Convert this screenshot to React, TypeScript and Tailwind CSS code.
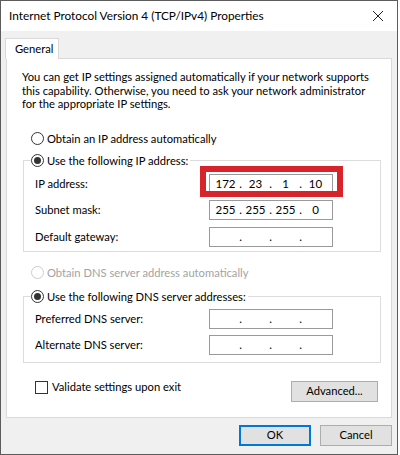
import React from "react";

const font = { fontFamily: 'Lato, "Noto Sans", sans-serif' };

function IpBox({ values }: { values?: string[] }) {
  const v = values ?? ["", "", "", ""];
  return (
    <div className="w-[124px] h-[20px] border border-[#9a9a9a] bg-white flex items-center pl-[3px] text-[11.5px] text-black leading-none">
      <span className="w-[25px] text-center">{v[0]}</span>
      <span className="w-[5px] text-center">.</span>
      <span className="w-[25px] text-center">{v[1]}</span>
      <span className="w-[5px] text-center">.</span>
      <span className="w-[25px] text-center">{v[2]}</span>
      <span className="w-[5px] text-center">.</span>
      <span className="w-[25px] text-center">{v[3]}</span>
    </div>
  );
}

function Radio({ checked, disabled }: { checked?: boolean; disabled?: boolean }) {
  return (
    <span
      className={
        "w-[13px] h-[13px] rounded-full border bg-white flex items-center justify-center shrink-0 " +
        (disabled ? "border-[#cccccc]" : "border-[#333333]")
      }
    >
      {checked && <span className="w-[7px] h-[7px] rounded-full bg-[#333333]" />}
    </span>
  );
}

function Row({ label, children }: { label: string; children: React.ReactNode }) {
  return (
    <div className="flex items-center h-[20px]">
      <span className="w-[185px] pl-[11px] whitespace-nowrap">{label}</span>
      {children}
    </div>
  );
}

export default function App() {
  return (
    <div style={font} className="w-[398px] h-[455px] border border-[#5c5c5c] bg-[#f0f0f0] flex flex-col text-black text-[11.2px] leading-[16px]">
      {/* title bar */}
      <div className="h-[30px] bg-white flex items-center justify-between pl-[8px] pr-[8px] shrink-0">
        <span className="text-[11.8px] text-black whitespace-nowrap">Internet Protocol Version 4 (TCP/IPv4) Properties</span>
        <svg width="12" height="12" viewBox="0 0 12 12" className="mr-[5px]">
          <path d="M1 1 L11 11 M11 1 L1 11" stroke="#222" strokeWidth="1" />
        </svg>
      </div>

      {/* tabs */}
      <div className="pt-[7px] pl-[4px]">
        <div className="relative z-10 w-[54px] h-[21px] bg-white border border-b-0 border-[#d9d9d9] flex items-center pl-[9px]">
          General
        </div>
      </div>

      {/* panel */}
      <div className="mx-[5px] -mt-[1px] bg-white border border-[#d9d9d9] flex flex-col pb-[15px]">
        <p className="mt-[11px] pl-[15px] leading-[13.5px] whitespace-nowrap">
          You can get IP settings assigned automatically if your network supports
          <br />
          this capability. Otherwise, you need to ask your network administrator
          <br />
          for the appropriate IP settings.
        </p>

        <div className="mt-[20px] pl-[24px] flex items-center gap-[3px] h-[16px]">
          <Radio />
          <span>Obtain an IP address automatically</span>
        </div>

        <fieldset className="mt-[6px] ml-[16px] mr-[10px] border border-[#dcdcdc] pb-[4px] relative">
          <legend className="ml-[7px] pr-[2px] flex items-center gap-[3px] h-[16px]">
            <Radio checked />
            <span>Use the following IP address:</span>
          </legend>
          <div className="mt-[5px] flex flex-col gap-[6.5px]">
            <Row label="IP address:">
              <div className="relative">
                <IpBox values={["172", "23", "1", "10"]} />
                <div className="absolute left-[-9px] top-[-8px] w-[143px] h-[31px] border-[6px] border-[#d9232b]" />
              </div>
            </Row>
            <Row label="Subnet mask:">
              <IpBox values={["255", "255", "255", "0"]} />
            </Row>
            <Row label="Default gateway:">
              <IpBox />
            </Row>
          </div>
        </fieldset>

        <div className="mt-[13px] pl-[24px] flex items-center gap-[3px] h-[16px] text-[#a3a3a3]">
          <Radio disabled />
          <span>Obtain DNS server address automatically</span>
        </div>

        <fieldset className="mt-[8px] ml-[16px] mr-[10px] border border-[#dcdcdc] pb-[7px]">
          <legend className="ml-[7px] pr-[2px] flex items-center gap-[3px] h-[16px]">
            <Radio checked />
            <span>Use the following DNS server addresses:</span>
          </legend>
          <div className="mt-[4px] flex flex-col gap-[6px]">
            <Row label="Preferred DNS server:">
              <IpBox />
            </Row>
            <Row label="Alternate DNS server:">
              <IpBox />
            </Row>
          </div>
        </fieldset>

        <div className="mt-[18px] flex items-start justify-between pl-[28px] pr-[13px]">
          <div className="flex items-center gap-[4px] h-[13px]">
            <span className="w-[13px] h-[13px] border border-[#333333] bg-white" />
            <span>Validate settings upon exit</span>
          </div>
          <div className="w-[87px] h-[21px] bg-[#e1e1e1] border border-[#adadad] flex items-center justify-center">
            Advanced...
          </div>
        </div>
      </div>

      {/* bottom buttons */}
      <div className="mt-[7px] flex justify-end gap-[9px] pr-[5px]">
        <div className="w-[72px] h-[21px] bg-[#e1e1e1] border-2 border-[#0078d7] flex items-center justify-center">
          OK
        </div>
        <div className="w-[72px] h-[21px] bg-[#e1e1e1] border border-[#adadad] flex items-center justify-center">
          Cancel
        </div>
      </div>
    </div>
  );
}
